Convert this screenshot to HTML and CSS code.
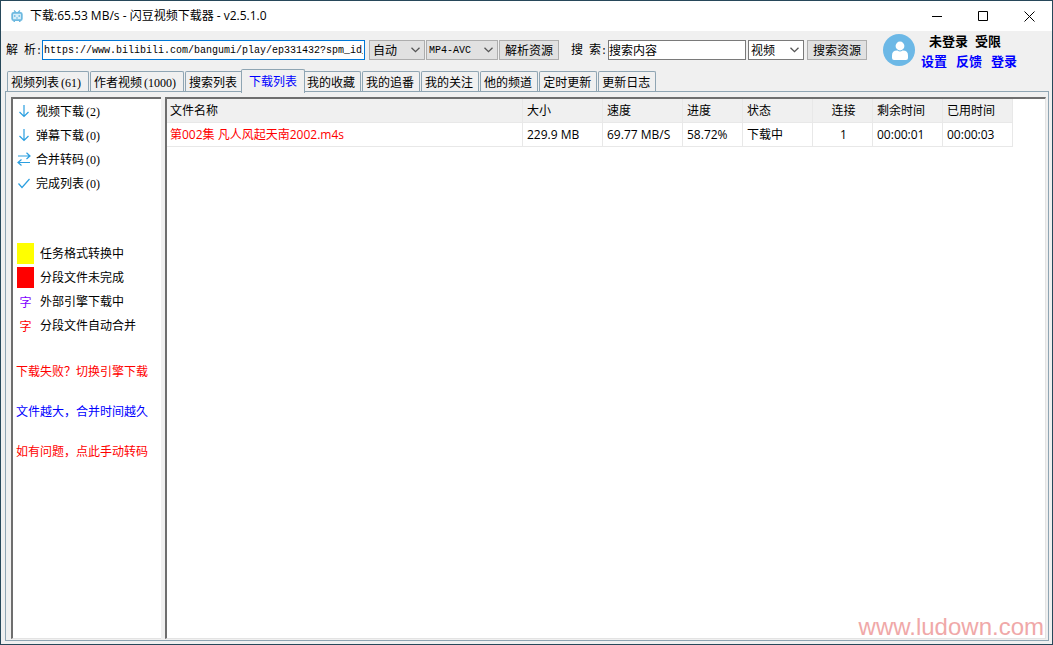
FILE: index.html
```html
<!DOCTYPE html>
<html lang="zh-CN">
<head>
<meta charset="utf-8">
<title>闪豆视频下载器</title>
<link rel="stylesheet" href="styles.css">
</head>
<body>
<div class="window">
  <header class="titlebar">
    <svg class="app-icon" viewBox="0 0 12 12" fill="none" stroke="#6db9e0"><path d="M3 .5l2 2M9 .5l-2 2" stroke-width="1.2"/><rect x="1.2" y="2.8" width="9.6" height="7.4" rx="1.4" stroke-width="1.8" fill="#d7eefa"/><path d="M3.8 5v2M8.2 5v2M5 8h2M2.5 11.4h1.5M8 11.4h1.5" stroke-width="1.2"/></svg>
    <h1 class="title">下载:65.53 MB/s - 闪豆视频下载器 - v2.5.1.0</h1>
    <div class="window-buttons">
      <button class="win-btn" aria-label="最小化"><svg viewBox="0 0 11 11"><path d="M0 5.5h10"/></svg></button>
      <button class="win-btn" aria-label="最大化"><svg viewBox="0 0 11 11"><path d="M.5.5h9v9h-9z"/></svg></button>
      <button class="win-btn" aria-label="关闭"><svg viewBox="0 0 11 11"><path d="M.5.5l10 10M10.5.5l-10 10"/></svg></button>
    </div>
  </header>

  <form class="toolbar">
    <label class="field-label" for="url">解<span class="mono"> </span>析<span class="mono">:</span></label>
    <input class="text-box url-box" id="url" type="text" value="https://www.bilibili.com/bangumi/play/ep331432?spm_id_from">
    <div class="combo combo-quality">
      <select aria-label="清晰度"><option>自动</option></select>
      <svg class="chevron" viewBox="0 0 9 6"><path d="M.5.7l4 4 4-4"/></svg>
    </div>
    <div class="combo combo-codec">
      <select class="mono" aria-label="编码"><option>MP4-AVC</option></select>
      <svg class="chevron" viewBox="0 0 9 6"><path d="M.5.7l4 4 4-4"/></svg>
    </div>
    <button class="push" type="button">解析资源</button>
    <label class="field-label search-label" for="search">搜<span class="mono"> </span>索<span class="mono">:</span></label>
    <input class="text-box search-box" id="search" type="text" value="搜索内容">
    <div class="combo combo-kind">
      <select aria-label="搜索类型"><option>视频</option></select>
      <svg class="chevron" viewBox="0 0 9 6"><path d="M.5.7l4 4 4-4"/></svg>
    </div>
    <button class="push" type="button">搜索资源</button>
    <svg class="avatar" viewBox="0 0 32 32"><circle cx="16" cy="16" r="16" fill="#6cb8e6"/><circle cx="17" cy="12" r="4.4" fill="#fff"/><path d="M9 24v-2.500q0-5 5-5h.5q2.500 2 5 0h.5q5 0 5 5V24q0 2-2 2H11q-2 0-2-2z" fill="#fff"/></svg>
    <div class="account">
      <div class="account-state"><span>未登录</span><span>受限</span></div>
      <nav class="account-links"><a href="#">设置</a><a href="#">反馈</a><a href="#">登录</a></nav>
    </div>
  </form>

  <nav class="tabs">
    <button class="tab">视频列表<span class="count">(61)</span></button>
    <button class="tab">作者视频<span class="count">(1000)</span></button>
    <button class="tab">搜索列表</button>
    <button class="tab active">下载列表</button>
    <button class="tab">我的收藏</button>
    <button class="tab">我的追番</button>
    <button class="tab">我的关注</button>
    <button class="tab">他的频道</button>
    <button class="tab">定时更新</button>
    <button class="tab">更新日志</button>
  </nav>

  <main class="page">
    <aside class="sidebar sunken">
      <nav class="queues">
        <button class="queue"><svg viewBox="0 0 14 14"><path d="M7 1v11M2.500 8L7 12.500 11.500 8"/></svg><span>视频下载<span class="count">(2)</span></span></button>
        <button class="queue"><svg viewBox="0 0 14 14"><path d="M7 1v11M2.500 8L7 12.500 11.500 8"/></svg><span>弹幕下载<span class="count">(0)</span></span></button>
        <button class="queue"><svg viewBox="0 0 14 14"><path d="M1 4h12M9.500.8L13 4 9.500 7M13 10.500H1M4.500 7.500L1 10.500l3.500 3"/></svg><span>合并转码<span class="count">(0)</span></span></button>
        <button class="queue"><svg viewBox="0 0 14 14"><path d="M1.500 7.500L5 11.500l7.500-8.500"/></svg><span>完成列表<span class="count">(0)</span></span></button>
      </nav>
      <ul class="legend">
        <li><span class="swatch yellow"></span>任务格式转换中</li>
        <li><span class="swatch red"></span>分段文件未完成</li>
        <li><span class="swatch glyph-purple">字</span>外部引擎下载中</li>
        <li><span class="swatch glyph-red">字</span>分段文件自动合并</li>
      </ul>
      <div class="notes">
        <a class="note-red" href="#">下载失败？切换引擎下载</a>
        <a class="note-blue" href="#">文件越大，合并时间越久</a>
        <a class="note-red" href="#">如有问题，点此手动转码</a>
      </div>
    </aside>

    <section class="list sunken">
      <table class="downloads">
        <colgroup><col class="c-name"><col class="c-80"><col class="c-80"><col class="c-60"><col class="c-70"><col class="c-60"><col class="c-70"><col class="c-70"></colgroup>
        <thead>
          <tr><th>文件名称</th><th>大小</th><th>速度</th><th>进度</th><th>状态</th><th class="center">连接</th><th>剩余时间</th><th>已用时间</th></tr>
        </thead>
        <tbody>
          <tr><td class="failed">第002集 凡人风起天南2002.m4s</td><td>229.9 MB</td><td>69.77 MB/S</td><td>58.72%</td><td>下载中</td><td class="center">1</td><td>00:00:01</td><td>00:00:03</td></tr>
        </tbody>
      </table>
      <div class="watermark">www.ludown.com</div>
    </section>
  </main>
</div>
</body>
</html>
```
FILE: styles.css
```css
* {
  box-sizing: border-box;
}

body {
  margin: 0;
  color: #000;
  font: 12px/18px "Noto Sans CJK SC", sans-serif;
}

button,
input,
select {
  margin: 0;
  border-radius: 0;
  color: inherit;
  font: inherit;
}

a {
  color: inherit;
  text-decoration: none;
}

.mono {
  font-family: "Liberation Mono", "Noto Sans CJK SC", monospace;
  font-size: 10px;
  white-space: pre;
}

.count {
  padding: 0 2px;
  font-family: "Liberation Serif", serif;
}

.window {
  display: flex;
  flex-direction: column;
  min-height: 100vh;
  border: 1px solid #27485a;
  background: #f0f0f0;
}

/* Title bar */
.titlebar {
  display: flex;
  align-items: center;
  height: 30px;
  padding-left: 10px;
  background: #fff;
}

.app-icon {
  width: 12px;
  height: 12px;
}

.title {
  flex: 1;
  margin: 0 0 0 7px;
  font: 12px/18px "Open Sans", "Noto Sans CJK SC", sans-serif;
}

.window-buttons {
  display: flex;
}

.win-btn {
  display: flex;
  align-items: center;
  justify-content: center;
  width: 46px;
  height: 30px;
  padding: 0;
  border: 0;
  background: none;
}

.win-btn svg {
  width: 11px;
  height: 11px;
  fill: none;
  stroke: #000;
}

/* Toolbar */
.toolbar {
  display: flex;
  align-items: center;
  height: 38px;
  padding-left: 5px;
}

.field-label {
  width: 36px;
  white-space: nowrap;
}

.text-box {
  height: 20px;
  padding: 0 1px 1px;
  border: 1px solid #7a7a7a;
  outline: 0;
  background: #fff;
}

.url-box {
  flex: 0 1 323px;
  min-width: 80px;
  padding: 0 1px;
  border-color: #0078d7;
  font: 10px/18px "Liberation Mono", monospace;
}

.search-label {
  margin-left: 12px;
}

.search-box {
  width: 138px;
  margin-left: 1px;
  padding: 0 0 2px;
}

.combo {
  display: grid;
  align-items: center;
  height: 20px;
  border: 1px solid #adadad;
  background: #e1e1e1;
}

.combo select {
  grid-area: 1 / 1;
  width: 100%;
  height: 18px;
  padding: 0 3px;
  border: 0;
  outline: 0;
  appearance: none;
  background: none;
}

.combo .mono {
  font-size: 10px;
  padding: 1px 2px 0;
}

.chevron {
  grid-area: 1 / 1;
  justify-self: end;
  width: 9px;
  height: 6px;
  margin-right: 4px;
  fill: none;
  stroke: #555;
  stroke-width: 1.3;
  pointer-events: none;
}

.combo-quality {
  width: 56px;
  margin-left: 4px;
}

.combo-codec {
  width: 72px;
  margin: 0 1px;
}

.combo-kind {
  width: 56px;
  margin: 0 3px 0 2px;
  border-color: #7a7a7a;
  background: #fff;
}

.combo-kind select {
  padding: 0 2px 2px;
}

.push {
  width: 60px;
  height: 20px;
  padding: 0;
  border: 1px solid #adadad;
  background: #e1e1e1;
  line-height: 18px;
  white-space: nowrap;
}

.avatar {
  flex: none;
  width: 32px;
  height: 32px;
  margin-left: 16px;
}

.account {
  margin: 2px 0 0 6px;
  font-size: 13px;
  font-weight: bold;
  line-height: 20px;
  white-space: nowrap;
}

.account-state {
  display: flex;
  gap: 7px;
  padding-left: 8px;
}

.account-links {
  display: flex;
  gap: 9px;
  color: #00f;
}

/* Tabs */
.tabs {
  display: flex;
  align-items: flex-end;
  gap: 1px;
  height: 23px;
  padding-left: 6px;
}

.tab {
  height: 21px;
  padding: 0 5px 0 3px;
  border: 1px solid #8fa5b3;
  border-bottom: 0;
  border-radius: 2px 2px 0 0;
  background: #f0f0f0;
  line-height: 20px;
  white-space: nowrap;
}

.tab.active {
  z-index: 1;
  height: 24px;
  margin: 0 -3px -1px;
  padding: 0 7px 2px;
  color: #00f;
}

/* Page */
.page {
  display: flex;
  flex: 1;
  gap: 4px;
  margin: -1px 3px 3px 4px;
  padding: 5px 2px 1px 5px;
  border: 1px solid #8fa5b3;
}

.sunken {
  border: solid;
  border-width: 2px 1px 1px 2px;
  border-color: #6e6e6e #e3e3e3 #e3e3e3 #6e6e6e;
  background: #fff;
}

.sidebar {
  flex: none;
  width: 150px;
  border-right: 0;
}

.queue {
  display: flex;
  align-items: center;
  gap: 5px;
  width: 100%;
  height: 24px;
  padding: 0 0 0 4px;
  border: 0;
  background: none;
}

.queue svg {
  width: 14px;
  height: 14px;
  fill: none;
  stroke: #2b9fe0;
  stroke-width: 1.2;
}

.legend {
  margin: 46px 0 0;
  padding: 0 0 0 4px;
  list-style: none;
}

.legend li {
  display: flex;
  align-items: center;
  gap: 6px;
  height: 24px;
}

.swatch {
  width: 17px;
  height: 21px;
  line-height: 21px;
  text-align: center;
}

.yellow {
  background: #ff0;
}

.red {
  background: #f00;
}

.glyph-purple {
  color: #8000ff;
}

.glyph-red {
  color: #f00;
}

.notes {
  display: flex;
  flex-direction: column;
  gap: 20px;
  margin-top: 24px;
  padding-left: 3px;
  line-height: 20px;
  white-space: nowrap;
}

.note-red {
  color: #f00;
}

.note-blue {
  color: #00f;
}

/* Download list */
.list {
  position: relative;
  flex: 1;
  min-width: 0;
}

.downloads {
  border-collapse: separate;
  border-spacing: 0;
  table-layout: fixed;
  width: 846px;
  font: 12px/18px "Open Sans", "Noto Sans CJK SC", sans-serif;
}

.c-name {
  width: 356px;
}

.c-80 {
  width: 80px;
}

.c-70 {
  width: 70px;
}

.c-60 {
  width: 60px;
}

.downloads th,
.downloads td {
  height: 24px;
  padding: 0 0 0 4px;
  border: solid #e8e8e8;
  border-width: 0 1px 1px 0;
  font-weight: normal;
  text-align: left;
  white-space: nowrap;
}

.downloads th:first-child,
.downloads td:first-child {
  padding-left: 3px;
}

.downloads th {
  background: #f0f0f0;
}

.downloads .center {
  padding: 0 0 0 2px;
  text-align: center;
}

.downloads .failed {
  color: #f00;
}

.watermark {
  position: absolute;
  right: 1px;
  bottom: 0;
  color: #f0a8a8;
  font: 24px/22px "Liberation Sans", sans-serif;
}
```
